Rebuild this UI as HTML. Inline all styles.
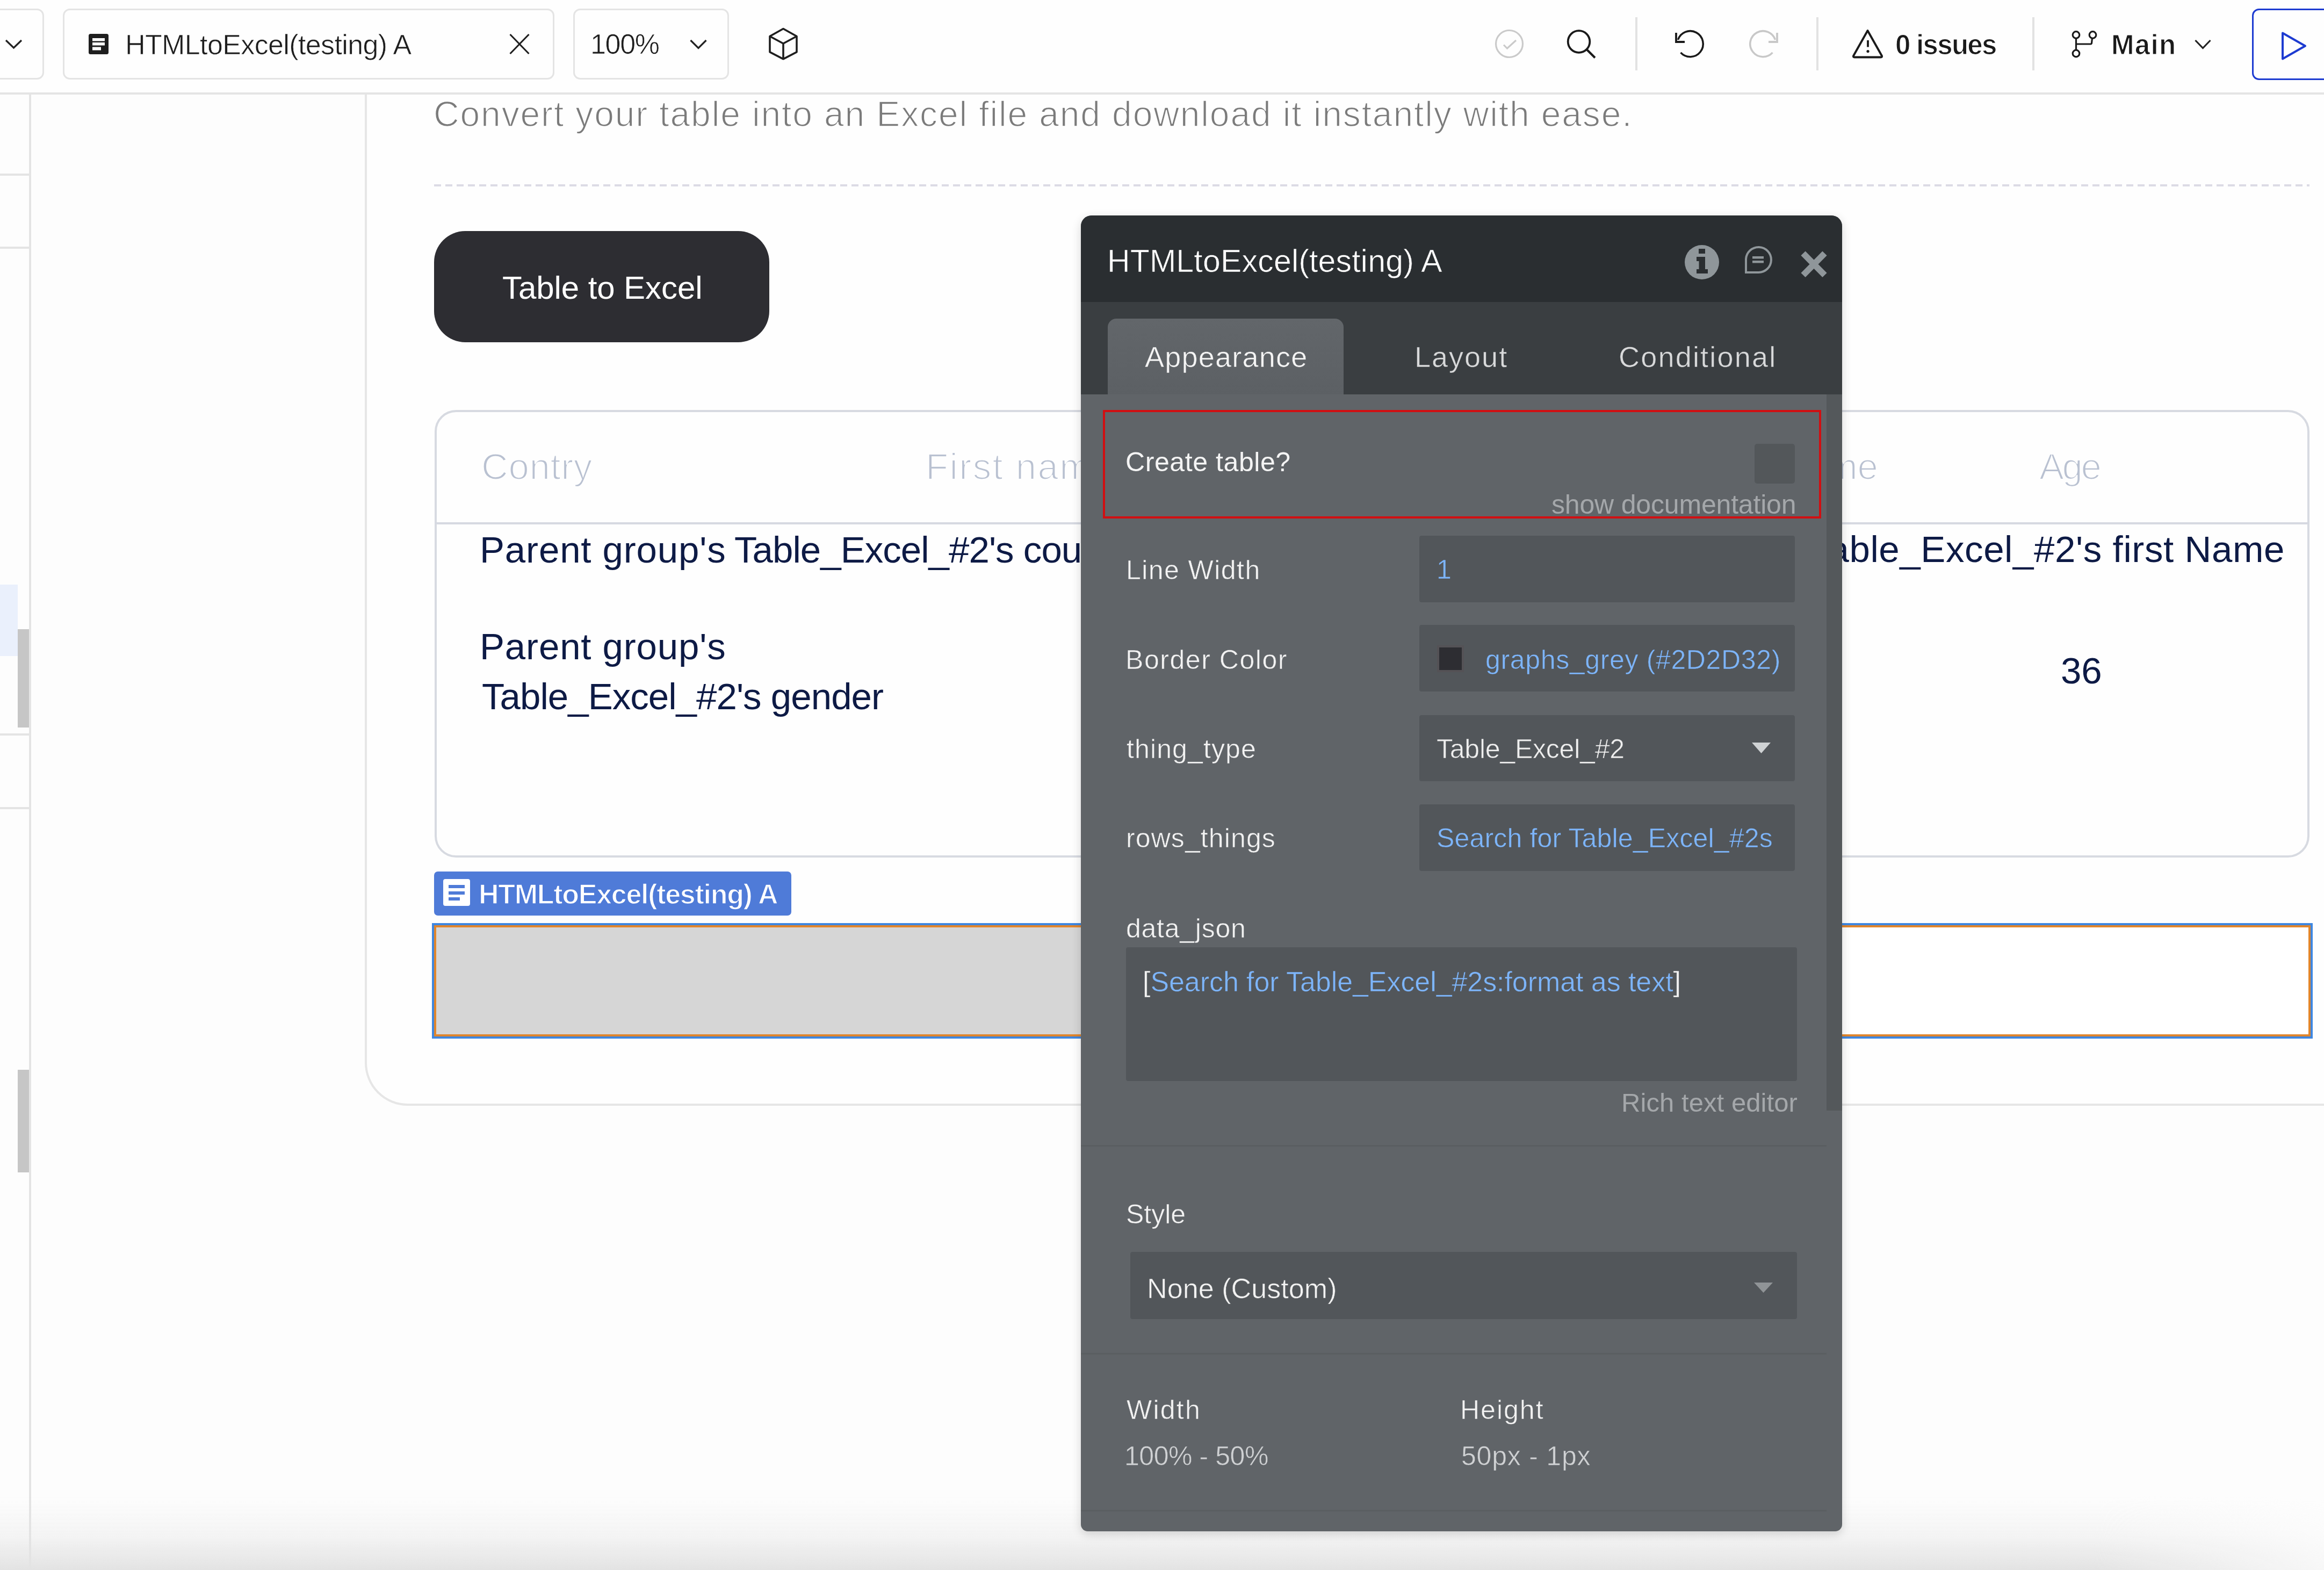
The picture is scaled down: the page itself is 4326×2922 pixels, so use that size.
<!DOCTYPE html><html><head><meta charset="utf-8"><style>
html,body{margin:0;padding:0;width:4326px;height:2922px;overflow:hidden;background:#fdfdfd;font-family:"Liberation Sans",sans-serif;}
.t{position:absolute;white-space:pre;}
.b{position:absolute;box-sizing:border-box;}
svg{position:absolute;overflow:visible;}
</style></head><body>
<div class="b" style="left:679px;top:-200px;width:3821px;height:2258px;border-left:4px solid #e6e6e6;border-bottom:4px solid #e6e6e6;border-bottom-left-radius:80px;background:#fefefe;"></div>
<div class="t" style="font-weight:400;font-size:66px;line-height:66px;letter-spacing:1.86px;color:#7b7b7b;top:178.9px;left:807.0px;-webkit-text-stroke:1.6px #fefefe;">Convert your table into an Excel file and download it instantly with ease.</div>
<div class="b" style="left:808px;top:343px;width:3491px;height:4px;background:repeating-linear-gradient(90deg,#dcdbe5 0 13px,transparent 13px 21px);"></div>
<div class="b" style="left:808px;top:430px;width:624px;height:207px;background:#2d2d32;border-radius:58px;"></div>
<div class="t" style="font-weight:400;font-size:60px;line-height:60px;letter-spacing:-0.08px;color:#ffffff;top:506.0px;left:935.0px;">Table to Excel</div>
<div class="b" style="left:809px;top:763px;width:3490px;height:833px;border:4px solid #d7dae1;border-radius:40px;"></div>
<div class="b" style="left:809px;top:972px;width:3490px;height:4px;background:#d6d9e1;"></div>
<div class="t" style="font-weight:400;font-size:69px;line-height:69px;letter-spacing:0.6px;color:#b9c1d1;top:834.4px;left:896.0px;-webkit-text-stroke:2.2px #fefefe;">Contry</div>
<div class="t" style="font-weight:400;font-size:69px;line-height:69px;letter-spacing:2.4px;color:#b9c1d1;top:834.4px;left:1723.0px;-webkit-text-stroke:2.2px #fefefe;">First name</div>
<div class="t" style="font-weight:400;font-size:69px;line-height:69px;letter-spacing:0.0px;color:#b9c1d1;top:834.4px;right:830.0px;-webkit-text-stroke:2.2px #fefefe;">Last Name</div>
<div class="t" style="font-weight:400;font-size:69px;line-height:69px;letter-spacing:-3.5px;color:#b9c1d1;top:834.4px;left:3796.0px;-webkit-text-stroke:2.2px #fefefe;">Age</div>
<div class="t" style="font-weight:400;font-size:69px;line-height:69px;letter-spacing:0.85px;color:#0d1a45;top:989.4px;left:893.0px;">Parent group's</div>
<div class="t" style="font-weight:400;font-size:69px;line-height:69px;letter-spacing:-0.95px;color:#0d1a45;top:989.4px;left:1367.0px;">Table_Excel_#2's country</div>
<div class="t" style="font-weight:400;font-size:69px;line-height:69px;letter-spacing:0.6px;color:#0d1a45;top:988.4px;right:73.0px;">Parent group's Table_Excel_#2's first Name</div>
<div class="t" style="font-weight:400;font-size:69px;line-height:69px;letter-spacing:0.85px;color:#0d1a45;top:1169.3px;left:893.0px;">Parent group's</div>
<div class="t" style="font-weight:400;font-size:69px;line-height:69px;letter-spacing:-0.95px;color:#0d1a45;top:1262.3px;left:897.0px;">Table_Excel_#2's gender</div>
<div class="t" style="font-weight:400;font-size:69px;line-height:69px;letter-spacing:0.0px;color:#0d1a45;top:1214.3px;left:3836.0px;">36</div>
<div class="b" style="left:808px;top:1622px;width:665px;height:82px;background:#4f7bd8;border-radius:7px;"></div>
<svg style="left:825px;top:1636px" width="50" height="50"><rect x="0" y="0" width="50" height="50" rx="4" fill="#fff"/><rect x="10" y="11" width="30" height="6" fill="#4f7bd8"/><rect x="10" y="23" width="30" height="6" fill="#4f7bd8"/><rect x="10" y="34" width="21" height="6" fill="#4f7bd8"/></svg>
<div class="t" style="font-weight:700;font-size:52px;line-height:52px;letter-spacing:-1.29px;color:#ffffff;top:1637.8px;left:891.0px;-webkit-text-stroke:1.5px #4f7bd8;">HTMLtoExcel(testing) A</div>
<div class="b" style="left:804px;top:1718px;width:3501px;height:215px;border:4px solid #3f87e0;background:#fff;"></div>
<div class="b" style="left:808px;top:1722px;width:3493px;height:207px;border:4px solid #e0852c;"></div>
<div class="b" style="left:812px;top:1726px;width:1588px;height:199px;background:#d6d6d6;"></div>
<div class="b" style="left:0px;top:0px;width:4326px;height:176px;background:#fefefe;border-bottom:4px solid #e4e4e4;"></div>
<div class="b" style="left:-40px;top:16px;width:122px;height:132px;border:3.5px solid #e4e4e4;border-radius:13px;"></div>
<svg style="left:0;top:0" width="60" height="120"><path d="M11 75 L25.5 89 L40 75" fill="none" stroke="#222" stroke-width="3.2"/></svg>
<div class="b" style="left:117px;top:16px;width:915px;height:132px;border:3.5px solid #e4e4e4;border-radius:13px;"></div>
<svg style="left:165px;top:63px" width="37" height="38"><rect x="0" y="0" width="37" height="38" rx="3.5" fill="#1e1e1e"/><rect x="7" y="8" width="23" height="5.5" fill="#fff"/><rect x="7" y="16" width="23" height="5.5" fill="#fff"/><rect x="7" y="24.5" width="16" height="6" fill="#fff"/></svg>
<div class="t" style="font-weight:400;font-size:52px;line-height:52px;letter-spacing:-0.62px;color:#1e1e1e;top:56.8px;left:233.0px;-webkit-text-stroke:0.7px #fefefe;">HTMLtoExcel(testing) A</div>
<svg style="left:940px;top:55px" width="52" height="52"><path d="M9.5 9 L44.5 45 M44.5 9 L9.5 45" fill="none" stroke="#1e1e1e" stroke-width="3.1"/></svg>
<div class="b" style="left:1067px;top:16px;width:290px;height:132px;border:3.5px solid #e4e4e4;border-radius:13px;"></div>
<div class="t" style="font-weight:400;font-size:52px;line-height:52px;letter-spacing:-1.33px;color:#1e1e1e;top:56.3px;left:1099.0px;-webkit-text-stroke:0.7px #fefefe;">100%</div>
<svg style="left:1270px;top:60px" width="60" height="40"><path d="M15.5 75 L30 89.5 L44.5 75" transform="translate(0,-60)" fill="none" stroke="#222" stroke-width="3.2"/></svg>
<svg style="left:1425px;top:48px" width="66" height="66"><g fill="none" stroke="#1e1e1e" stroke-width="3.6" stroke-linejoin="round"><path d="M33 5.5 L58 19.5 L58 48.8 L33 61.8 L8 48.8 L8 19.5 Z"/><path d="M8 19.5 L33 33 L58 19.5 M33 33 L33 61.8"/></g></svg>
<svg style="left:2780px;top:52px" width="60" height="60"><circle cx="29.5" cy="29.5" r="25" fill="none" stroke="#cacaca" stroke-width="3.2"/><path d="M19 31.5 L25.5 38 L42 23" fill="none" stroke="#cacaca" stroke-width="3.1"/></svg>
<svg style="left:2910px;top:50px" width="70" height="70"><circle cx="29" cy="27.5" r="20.3" fill="none" stroke="#1a1a1a" stroke-width="3.8"/><path d="M43.5 42 L59 57.5" stroke="#1a1a1a" stroke-width="4"/></svg>
<div class="b" style="left:3044px;top:32px;width:4px;height:99px;background:#e2e2e2;"></div>
<svg style="left:3110px;top:50px" width="70" height="70"><path d="M13.5 24 A24 24 0 1 1 18.5 47.9" fill="none" stroke="#1a1a1a" stroke-width="3.6"/><path d="M10 11 L10 28 L26 28" fill="none" stroke="#1a1a1a" stroke-width="3.8"/></svg>
<svg style="left:3250px;top:50px" width="70" height="70"><path d="M54.5 24 A24 24 0 1 0 49.5 47.9" fill="none" stroke="#c8c8c8" stroke-width="3.6"/><path d="M58 11 L58 28 L42 28" fill="none" stroke="#c8c8c8" stroke-width="3.8"/></svg>
<div class="b" style="left:3381px;top:32px;width:4px;height:99px;background:#e2e2e2;"></div>
<svg style="left:3440px;top:48px" width="72" height="66"><path d="M36.5 9 L63 56 Q64 58.5 61 58.5 L12 58.5 Q9 58.5 10 56 Z" fill="none" stroke="#1a1a1a" stroke-width="3.8" stroke-linejoin="round"/><path d="M37 27 L37 39.5" stroke="#1a1a1a" stroke-width="3.8"/><circle cx="37" cy="47.5" r="2.6" fill="#1a1a1a"/></svg>
<div class="t" style="font-weight:700;font-size:51px;line-height:51px;letter-spacing:-1.71px;color:#1a1a1a;top:57.6px;left:3528.0px;-webkit-text-stroke:1.2px #fefefe;">0 issues</div>
<div class="b" style="left:3783px;top:32px;width:4px;height:99px;background:#e2e2e2;"></div>
<svg style="left:3850px;top:52px" width="60" height="60"><g fill="none" stroke="#1a1a1a" stroke-width="3.2"><circle cx="14.5" cy="13" r="6.3"/><circle cx="45.5" cy="13" r="6.3"/><circle cx="14.5" cy="47.5" r="6.3"/><path d="M14.5 19.3 L14.5 41.2 M14.5 30 L41.5 30 Q43 30 43.5 28.5 L44.5 19"/></g></svg>
<div class="t" style="font-weight:700;font-size:51px;line-height:51px;letter-spacing:1.33px;color:#1a1a1a;top:57.6px;left:3930.0px;-webkit-text-stroke:1.2px #fefefe;">Main</div>
<svg style="left:4070px;top:60px" width="60" height="40"><path d="M16.5 15 L30.5 29.5 L44.5 15" fill="none" stroke="#222" stroke-width="3.2"/></svg>
<div class="b" style="left:4192px;top:16px;width:208px;height:133px;border:3.6px solid #1d3bd1;border-radius:13px;"></div>
<svg style="left:4240px;top:55px" width="60" height="62"><path d="M9 6.5 L51 30.5 L9 54.5 Z" fill="none" stroke="#1d3bd1" stroke-width="4" stroke-linejoin="round"/></svg>
<div class="b" style="left:0px;top:176px;width:54px;height:2746px;background:#fdfdfd;"></div>
<div class="b" style="left:54px;top:176px;width:4px;height:2746px;background:#e4e4e4;"></div>
<div class="b" style="left:0px;top:323px;width:54px;height:4px;background:#e4e4e4;"></div>
<div class="b" style="left:0px;top:459px;width:54px;height:4px;background:#e4e4e4;"></div>
<div class="b" style="left:0px;top:1365px;width:54px;height:4px;background:#e4e4e4;"></div>
<div class="b" style="left:0px;top:1502px;width:54px;height:4px;background:#e4e4e4;"></div>
<div class="b" style="left:0px;top:1088px;width:33px;height:133px;background:#eaf0fc;"></div>
<div class="b" style="left:33px;top:1171px;width:21px;height:183px;background:#c6c6c6;"></div>
<div class="b" style="left:33px;top:1991px;width:21px;height:191px;background:#c6c6c6;"></div>
<div class="b" style="left:0px;top:2785px;width:4326px;height:137px;background:linear-gradient(180deg,rgba(227,227,227,0) 0%,rgba(227,227,227,0.3) 50%,rgba(227,227,227,1) 100%);-webkit-mask-image:linear-gradient(90deg,#000 0,#000 3900px,rgba(0,0,0,0.2) 4326px);"></div>
<div class="b" style="left:2012px;top:401px;width:1417px;height:2449px;background:#606468;border-radius:20px 20px 13px 13px;box-shadow:0 5px 18px rgba(0,0,0,0.16);overflow:hidden;"></div>
<div class="b" style="left:2012px;top:401px;width:1417px;height:161px;background:#2a2e31;border-radius:20px 20px 0 0;"></div>
<div class="t" style="font-weight:400;font-size:59px;line-height:59px;letter-spacing:0.19px;color:#ffffff;top:457.4px;left:2061.0px;-webkit-text-stroke:0.7px #2a2e31;">HTMLtoExcel(testing) A</div>
<svg style="left:3136px;top:456px" width="64" height="64"><circle cx="32" cy="32" r="32" fill="#8f969a"/><rect x="26" y="7" width="12" height="9" fill="#2a2e31"/><path d="M22 22 L38 22 L38 45 L43 45 L43 53 L22 53 L22 45 L26.5 45 L26.5 30 L22 30 Z" fill="#2a2e31"/></svg>
<svg style="left:3246px;top:455px" width="56" height="56"><path d="M4 52 L4 27 A23.5 23.5 0 1 1 27.5 52 Z" fill="none" stroke="#8f969a" stroke-width="4"/><rect x="16" y="22" width="21" height="4.5" fill="#8f969a"/><rect x="16" y="30" width="21" height="4.5" fill="#8f969a"/></svg>
<svg style="left:3350px;top:465px" width="56" height="56"><path d="M6.5 6.5 L46.5 47 M46.5 6.5 L6.5 47" stroke="#8f969a" stroke-width="11.5"/></svg>
<div class="b" style="left:2012px;top:562px;width:1417px;height:172px;background:#3a3e41;"></div>
<div class="b" style="left:2062px;top:593px;width:439px;height:141px;background:linear-gradient(180deg,#62666a,#5c6064);border-radius:16px 16px 0 0;"></div>
<div class="t" style="font-weight:400;font-size:54px;line-height:54px;letter-spacing:1.22px;color:#f4f4f4;top:637.1px;left:2131.0px;-webkit-text-stroke:0.6px #5e6266;">Appearance</div>
<div class="t" style="font-weight:400;font-size:54px;line-height:54px;letter-spacing:2.0px;color:#d8d9da;top:637.1px;left:2633.0px;-webkit-text-stroke:0.6px #3a3e41;">Layout</div>
<div class="t" style="font-weight:400;font-size:54px;line-height:54px;letter-spacing:2.2px;color:#d8d9da;top:637.1px;left:3013.0px;-webkit-text-stroke:0.6px #3a3e41;">Conditional</div>
<div class="b" style="left:3400px;top:734px;width:29px;height:1333px;background:#54585b;"></div>
<div class="b" style="left:2053px;top:763px;width:1337px;height:202px;border:4.6px solid #d10f12;"></div>
<div class="t" style="font-weight:400;font-size:50px;line-height:50px;letter-spacing:0.58px;color:#f4f4f4;top:834.5px;left:2095.0px;">Create table?</div>
<div class="b" style="left:3266px;top:826px;width:75px;height:74px;background:#53575a;border-radius:5px;"></div>
<div class="t" style="font-weight:400;font-size:50px;line-height:50px;letter-spacing:-0.18px;color:#a4a7aa;top:913.5px;left:2888.0px;">show documentation</div>
<div class="b" style="left:2642px;top:997px;width:699px;height:124px;background:#52565a;border-radius:4px;"></div>
<div class="b" style="left:2642px;top:1163px;width:699px;height:124px;background:#52565a;border-radius:4px;"></div>
<div class="b" style="left:2642px;top:1331px;width:699px;height:123px;background:#52565a;border-radius:4px;"></div>
<div class="b" style="left:2642px;top:1497px;width:699px;height:124px;background:#52565a;border-radius:4px;"></div>
<div class="t" style="font-weight:400;font-size:50px;line-height:50px;letter-spacing:1.44px;color:#f2f2f2;top:1035.5px;left:2096.0px;-webkit-text-stroke:0.6px #606468;">Line Width</div>
<div class="t" style="font-weight:400;font-size:50px;line-height:50px;letter-spacing:0.0px;color:#7db5fb;top:1034.5px;left:2674.0px;-webkit-text-stroke:0.6px #52565a;">1</div>
<div class="t" style="font-weight:400;font-size:50px;line-height:50px;letter-spacing:1.55px;color:#f2f2f2;top:1202.5px;left:2095.0px;-webkit-text-stroke:0.6px #606468;">Border Color</div>
<div class="b" style="left:2675px;top:1201px;width:50px;height:50px;background:#545256;"></div>
<div class="b" style="left:2679px;top:1205px;width:42px;height:42px;background:#2d2d32;"></div>
<div class="t" style="font-weight:400;font-size:50px;line-height:50px;letter-spacing:0.65px;color:#7db5fb;top:1202.5px;left:2765.0px;-webkit-text-stroke:0.6px #52565a;">graphs_grey (#2D2D32)</div>
<div class="t" style="font-weight:400;font-size:50px;line-height:50px;letter-spacing:1.11px;color:#f2f2f2;top:1368.5px;left:2097.0px;-webkit-text-stroke:0.6px #606468;">thing_type</div>
<div class="t" style="font-weight:400;font-size:50px;line-height:50px;letter-spacing:-0.23px;color:#eeeeee;top:1368.5px;left:2674.0px;-webkit-text-stroke:0.6px #52565a;">Table_Excel_#2</div>
<svg style="left:3258px;top:1380px" width="40" height="26"><path d="M3 2 L38 2 L20.5 22 Z" fill="#cfd2d4"/></svg>
<div class="t" style="font-weight:400;font-size:50px;line-height:50px;letter-spacing:1.1px;color:#f2f2f2;top:1534.5px;left:2096.0px;-webkit-text-stroke:0.6px #606468;">rows_things</div>
<div class="t" style="font-weight:400;font-size:50px;line-height:50px;letter-spacing:0.16px;color:#7db5fb;top:1534.5px;left:2674.0px;-webkit-text-stroke:0.6px #52565a;">Search for Table_Excel_#2s</div>
<div class="t" style="font-weight:400;font-size:50px;line-height:50px;letter-spacing:0.75px;color:#f2f2f2;top:1702.5px;left:2096.0px;-webkit-text-stroke:0.6px #606468;">data_json</div>
<div class="b" style="left:2096px;top:1763px;width:1249px;height:249px;background:#52565a;border-radius:4px;"></div>
<div class="t" style="font-weight:400;font-size:52px;line-height:52px;letter-spacing:-0.07px;color:#7db5fb;top:1800.8px;left:2127.0px;-webkit-text-stroke:0.6px #52565a;"><span style="color:#f2f2f2">[</span>Search for Table_Excel_#2s:format as text<span style="color:#f2f2f2">]</span></div>
<div class="t" style="font-weight:400;font-size:49px;line-height:49px;letter-spacing:0.07px;color:#a4a7aa;top:2028.3px;left:3018.0px;">Rich text editor</div>
<div class="b" style="left:2012px;top:2131px;width:1388px;height:3px;background:#5a5e61;"></div>
<div class="t" style="font-weight:400;font-size:50px;line-height:50px;letter-spacing:0.0px;color:#f2f2f2;top:2234.5px;left:2096.0px;-webkit-text-stroke:0.6px #606468;">Style</div>
<div class="b" style="left:2104px;top:2330px;width:1241px;height:125px;background:#52565a;border-radius:4px;"></div>
<div class="t" style="font-weight:400;font-size:52px;line-height:52px;letter-spacing:0.08px;color:#f2f2f2;top:2371.8px;left:2135.0px;-webkit-text-stroke:0.6px #52565a;">None (Custom)</div>
<svg style="left:3262px;top:2384px" width="40" height="26"><path d="M3 3 L38 3 L20.5 22 Z" fill="#909497"/></svg>
<div class="b" style="left:2012px;top:2518px;width:1388px;height:3px;background:#5a5e61;"></div>
<div class="t" style="font-weight:400;font-size:50px;line-height:50px;letter-spacing:2.25px;color:#f2f2f2;top:2598.5px;left:2097.0px;-webkit-text-stroke:0.6px #606468;">Width</div>
<div class="t" style="font-weight:400;font-size:50px;line-height:50px;letter-spacing:2.0px;color:#f2f2f2;top:2598.5px;left:2718.0px;-webkit-text-stroke:0.6px #606468;">Height</div>
<div class="t" style="font-weight:400;font-size:50px;line-height:50px;letter-spacing:-0.44px;color:#cfd1d3;top:2684.5px;left:2093.0px;-webkit-text-stroke:0.6px #606468;">100% - 50%</div>
<div class="t" style="font-weight:400;font-size:50px;line-height:50px;letter-spacing:0.78px;color:#cfd1d3;top:2684.5px;left:2720.0px;-webkit-text-stroke:0.6px #606468;">50px - 1px</div>
<div class="b" style="left:2012px;top:2810px;width:1388px;height:3px;background:#5a5e61;"></div>
</body></html>
